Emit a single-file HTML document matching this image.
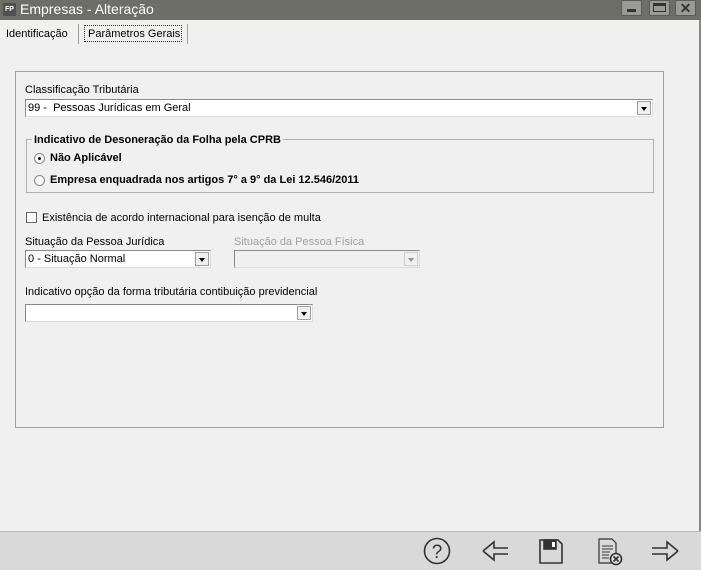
<!DOCTYPE html><html><head><style>
body{margin:0;width:701px;height:569px;position:relative;overflow:hidden;background:#f0f0f0;font-family:"Liberation Sans",sans-serif;font-size:11px;color:#000}
.a{position:absolute}
.title{left:0;top:0;width:701px;height:20px;background:#6d6e68}
.combo{position:absolute;background:#fff;border:1px solid #8a8a8a;border-right-color:#dcdcdc;border-bottom-color:#dcdcdc;height:18px;box-sizing:border-box;line-height:17px;padding-left:2px;font-size:11px}
.btn{position:absolute;right:1px;top:1px;width:14px;height:14px;background:#f0f0f0;border:1px solid #a0a0a0;box-sizing:border-box}
.btn:after{content:"";position:absolute;left:3px;top:5px;border-left:3px solid transparent;border-right:3px solid transparent;border-top:4px solid #000}
.wb{position:absolute;top:0;width:21px;height:16px;background:#9a9b96;border-radius:2px;border:1px solid #5a5b56;box-sizing:border-box}
</style></head><body>
<div class="a title"></div>
<div class="a" style="left:3px;top:3px;width:13px;height:13px;background:#505050;color:#fff;font-size:7px;line-height:13px;text-align:center;font-weight:bold">FP</div>
<div class="a" style="left:20px;top:1px;color:#fff;font-size:14px">Empresas - Alteração</div>
<div class="wb" style="left:621px"><div class="a" style="left:5px;top:8px;width:9px;height:3px;background:#333"></div></div>
<div class="wb" style="left:649px"><div class="a" style="left:3px;top:2px;width:13px;height:9px;border:1px solid #333;border-top-width:3px;box-sizing:border-box"></div></div>
<div class="wb" style="left:675px;color:#333;font-weight:bold;font-size:14px;text-align:center;line-height:15px">✕</div>
<div class="a" style="left:0;top:20px;width:699px;height:511px;background:#f0f0f0;border-right:2px solid #8a8a8a"></div>
<div class="a" style="left:6px;top:28px;font-size:11px">Identificação</div>
<div class="a" style="left:78px;top:24px;width:1px;height:20px;background:#a0a0a0"></div>
<div class="a" style="left:84px;top:25px;width:98px;height:17px;border:1px dotted #333;box-sizing:border-box"></div>
<div class="a" style="left:88px;top:28px">Parâmetros Gerais</div>
<div class="a" style="left:187px;top:24px;width:1px;height:20px;background:#a0a0a0"></div>
<div class="a" style="left:15px;top:71px;width:649px;height:357px;border:1px solid #a0a0a0;box-sizing:border-box"></div>
<div class="a" style="left:25px;top:84px">Classificação Tributária</div>
<div class="combo" style="left:25px;top:99px;width:628px">99 -&nbsp; Pessoas Jurídicas em Geral<div class="btn"></div></div>
<div class="a" style="left:26px;top:139px;width:628px;height:54px;border:1px solid #b0b0b0;box-sizing:border-box"></div>
<div class="a" style="left:32px;top:134px;background:#f0f0f0;padding:0 2px;font-weight:bold">Indicativo de Desoneração da Folha pela CPRB</div>
<div class="a" style="left:34px;top:153px;width:9px;height:9px;border:1px solid #888;border-radius:50%;background:#fff"><div class="a" style="left:3px;top:3px;width:3px;height:3px;border-radius:50%;background:#000"></div></div>
<div class="a" style="left:50px;top:152px;font-weight:bold">Não Aplicável</div>
<div class="a" style="left:34px;top:175px;width:9px;height:9px;border:1px solid #888;border-radius:50%;background:#fff"></div>
<div class="a" style="left:50px;top:174px;font-weight:bold">Empresa enquadrada nos artigos 7° a 9° da Lei 12.546/2011</div>
<div class="a" style="left:26px;top:212px;width:11px;height:11px;border:1px solid #666;background:#fff;box-sizing:border-box"></div>
<div class="a" style="left:42px;top:212px">Existência de acordo internacional para isenção de multa</div>
<div class="a" style="left:25px;top:236px">Situação da Pessoa Jurídica</div>
<div class="combo" style="left:25px;top:250px;width:186px">0 - Situação Normal<div class="btn"></div></div>
<div class="a" style="left:234px;top:236px;color:#a0a0a0">Situação da Pessoa Física</div>
<div class="combo" style="left:234px;top:250px;width:186px;background:#f0f0f0"><div class="btn" style="opacity:.4"></div></div>
<div class="a" style="left:25px;top:286px">Indicativo opção da forma tributária contibuição previdencial</div>
<div class="combo" style="left:25px;top:304px;width:288px"><div class="btn"></div></div>
<div class="a" style="left:0;top:531px;width:701px;height:38px;background:#d9d9d9;border-top:1px solid #b8b8b8"></div>
<svg class="a" style="left:420px;top:535px" width="281" height="34" fill="none" stroke="#333" stroke-width="1.6">
<circle cx="17" cy="16" r="12.5"/><text x="17" y="23" font-size="19" text-anchor="middle" fill="#333" stroke="none" font-family="Liberation Sans">?</text>
<path d="M63 16 L74 7 L74 13 L88 13 M63 16 L74 25 L74 19 L88 19"/>
<path d="M120 5 H138 L142 9 V28 H120 Z" /><rect x="124" y="5" width="12" height="9" fill="#333"/><rect x="132" y="7" width="3" height="5" fill="#fff" stroke="none"/>
<path d="M179 4 H192 L196 8 V28 H179 Z" stroke-width="1.2"/><path d="M182 11H193M182 14H193M182 17H190M182 20H189M182 23H189" stroke-width="1"/><circle cx="196" cy="24" r="5.5" fill="#ddd"/><path d="M193.5 21.5l5 5m0-5l-5 5" stroke-width="1.6"/>
<path d="M258 16 L247 7 L247 13 L232 13 M258 16 L247 25 L247 19 L232 19"/>
</svg>
</body></html>
